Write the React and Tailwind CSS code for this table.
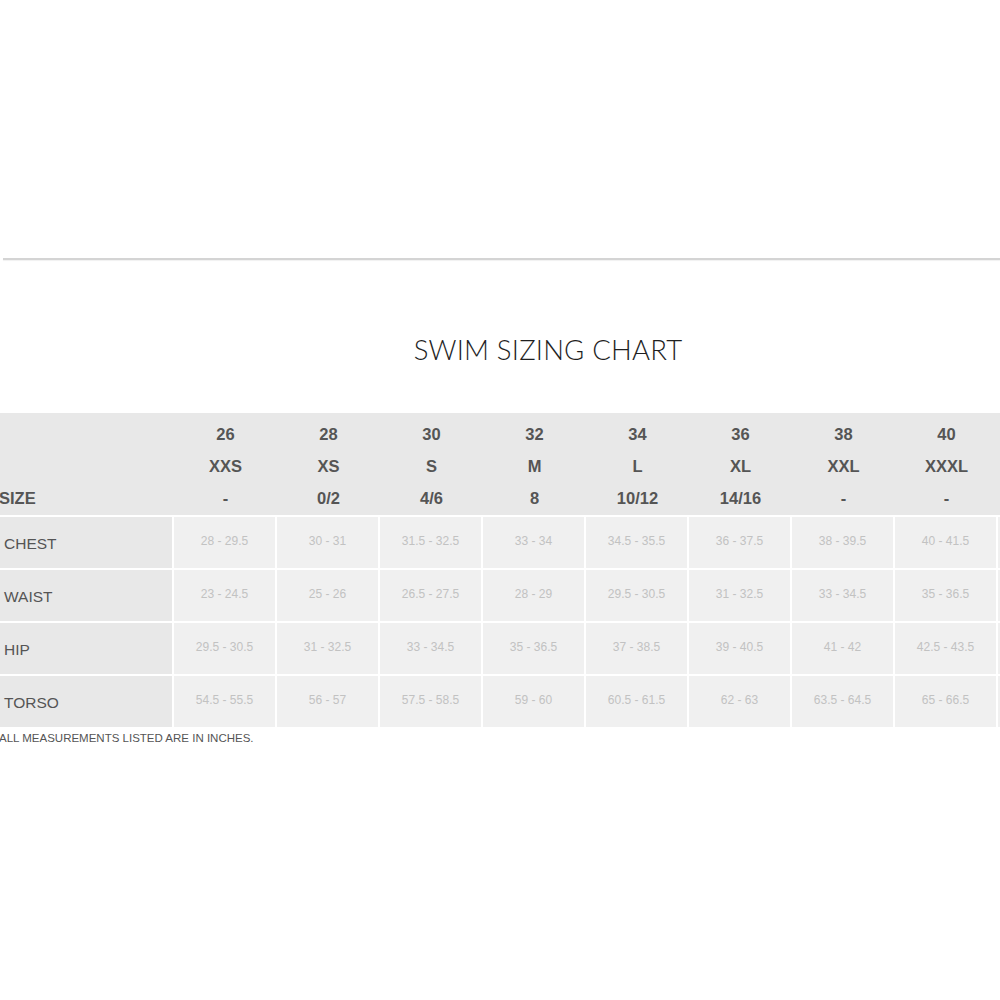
import React from 'react';

// Swim sizing chart page
const sizes = [
  { num: '26', label: 'XXS', us: '-' },
  { num: '28', label: 'XS', us: '0/2' },
  { num: '30', label: 'S', us: '4/6' },
  { num: '32', label: 'M', us: '8' },
  { num: '34', label: 'L', us: '10/12' },
  { num: '36', label: 'XL', us: '14/16' },
  { num: '38', label: 'XXL', us: '-' },
  { num: '40', label: 'XXXL', us: '-' },
];

const rows = [
  { name: 'CHEST', vals: ['28 - 29.5', '30 - 31', '31.5 - 32.5', '33 - 34', '34.5 - 35.5', '36 - 37.5', '38 - 39.5', '40 - 41.5'] },
  { name: 'WAIST', vals: ['23 - 24.5', '25 - 26', '26.5 - 27.5', '28 - 29', '29.5 - 30.5', '31 - 32.5', '33 - 34.5', '35 - 36.5'] },
  { name: 'HIP', vals: ['29.5 - 30.5', '31 - 32.5', '33 - 34.5', '35 - 36.5', '37 - 38.5', '39 - 40.5', '41 - 42', '42.5 - 43.5'] },
  { name: 'TORSO', vals: ['54.5 - 55.5', '56 - 57', '57.5 - 58.5', '59 - 60', '60.5 - 61.5', '62 - 63', '63.5 - 64.5', '65 - 66.5'] },
];

export default function App() {
  return (
    <div
      className="w-[1000px] h-[1000px] overflow-hidden bg-white"
      style={{ fontFamily: '"Liberation Sans", Arial, sans-serif' }}
    >
      <div className="h-[258px]" />
      <div className="ml-[3px] h-[2px] bg-[#d4d4d4] shadow-[0_1px_1px_rgba(0,0,0,0.06)]" />

      <h1
        className="mt-[72px] pl-[96px] text-center text-[27.5px] leading-[36px] font-light text-[#1f1f1f] tracking-[0.2px]"
        style={{ fontFamily: 'Lato, "Noto Sans", sans-serif' }}
      >
        SWIM SIZING CHART
      </h1>

      {/* chart */}
      <div className="mt-[45px] ml-[-8px] w-[1120px]">
        <div className="flex bg-[#e8e8e8] pt-[5px] pb-[1px] text-[16.5px] leading-[32px] font-bold text-[#555]">
          <div className="w-[182px] shrink-0 flex flex-col justify-end pl-[7px]">SIZE</div>
          {sizes.map(s => (
            <div key={s.num} className="w-[103px] shrink-0 flex flex-col items-center">
              <span>{s.num}</span>
              <span>{s.label}</span>
              <span>{s.us}</span>
            </div>
          ))}
        </div>

        {rows.map(r => (
          <div key={r.name} className="flex gap-[2px] mt-[2px] h-[51px]">
            <div className="w-[180px] shrink-0 bg-[#e8e8e8] flex items-center pl-[12px] pt-[2px] text-[15.5px] text-[#555]">
              {r.name}
            </div>
            {r.vals.map((v, i) => (
              <div key={i} className="w-[101px] shrink-0 bg-[#f0f0f0] flex items-center justify-center pb-[4px] text-[12px] text-[#c2c2c2]">
                {v}
              </div>
            ))}
            <div className="w-[101px] shrink-0 bg-[#f0f0f0]" />
          </div>
        ))}

        <p className="pl-[7px] mt-[4px] text-[11.5px] leading-[14px] text-[#555]">
          ALL MEASUREMENTS LISTED ARE IN INCHES.
        </p>
      </div>
    </div>
  );
}
